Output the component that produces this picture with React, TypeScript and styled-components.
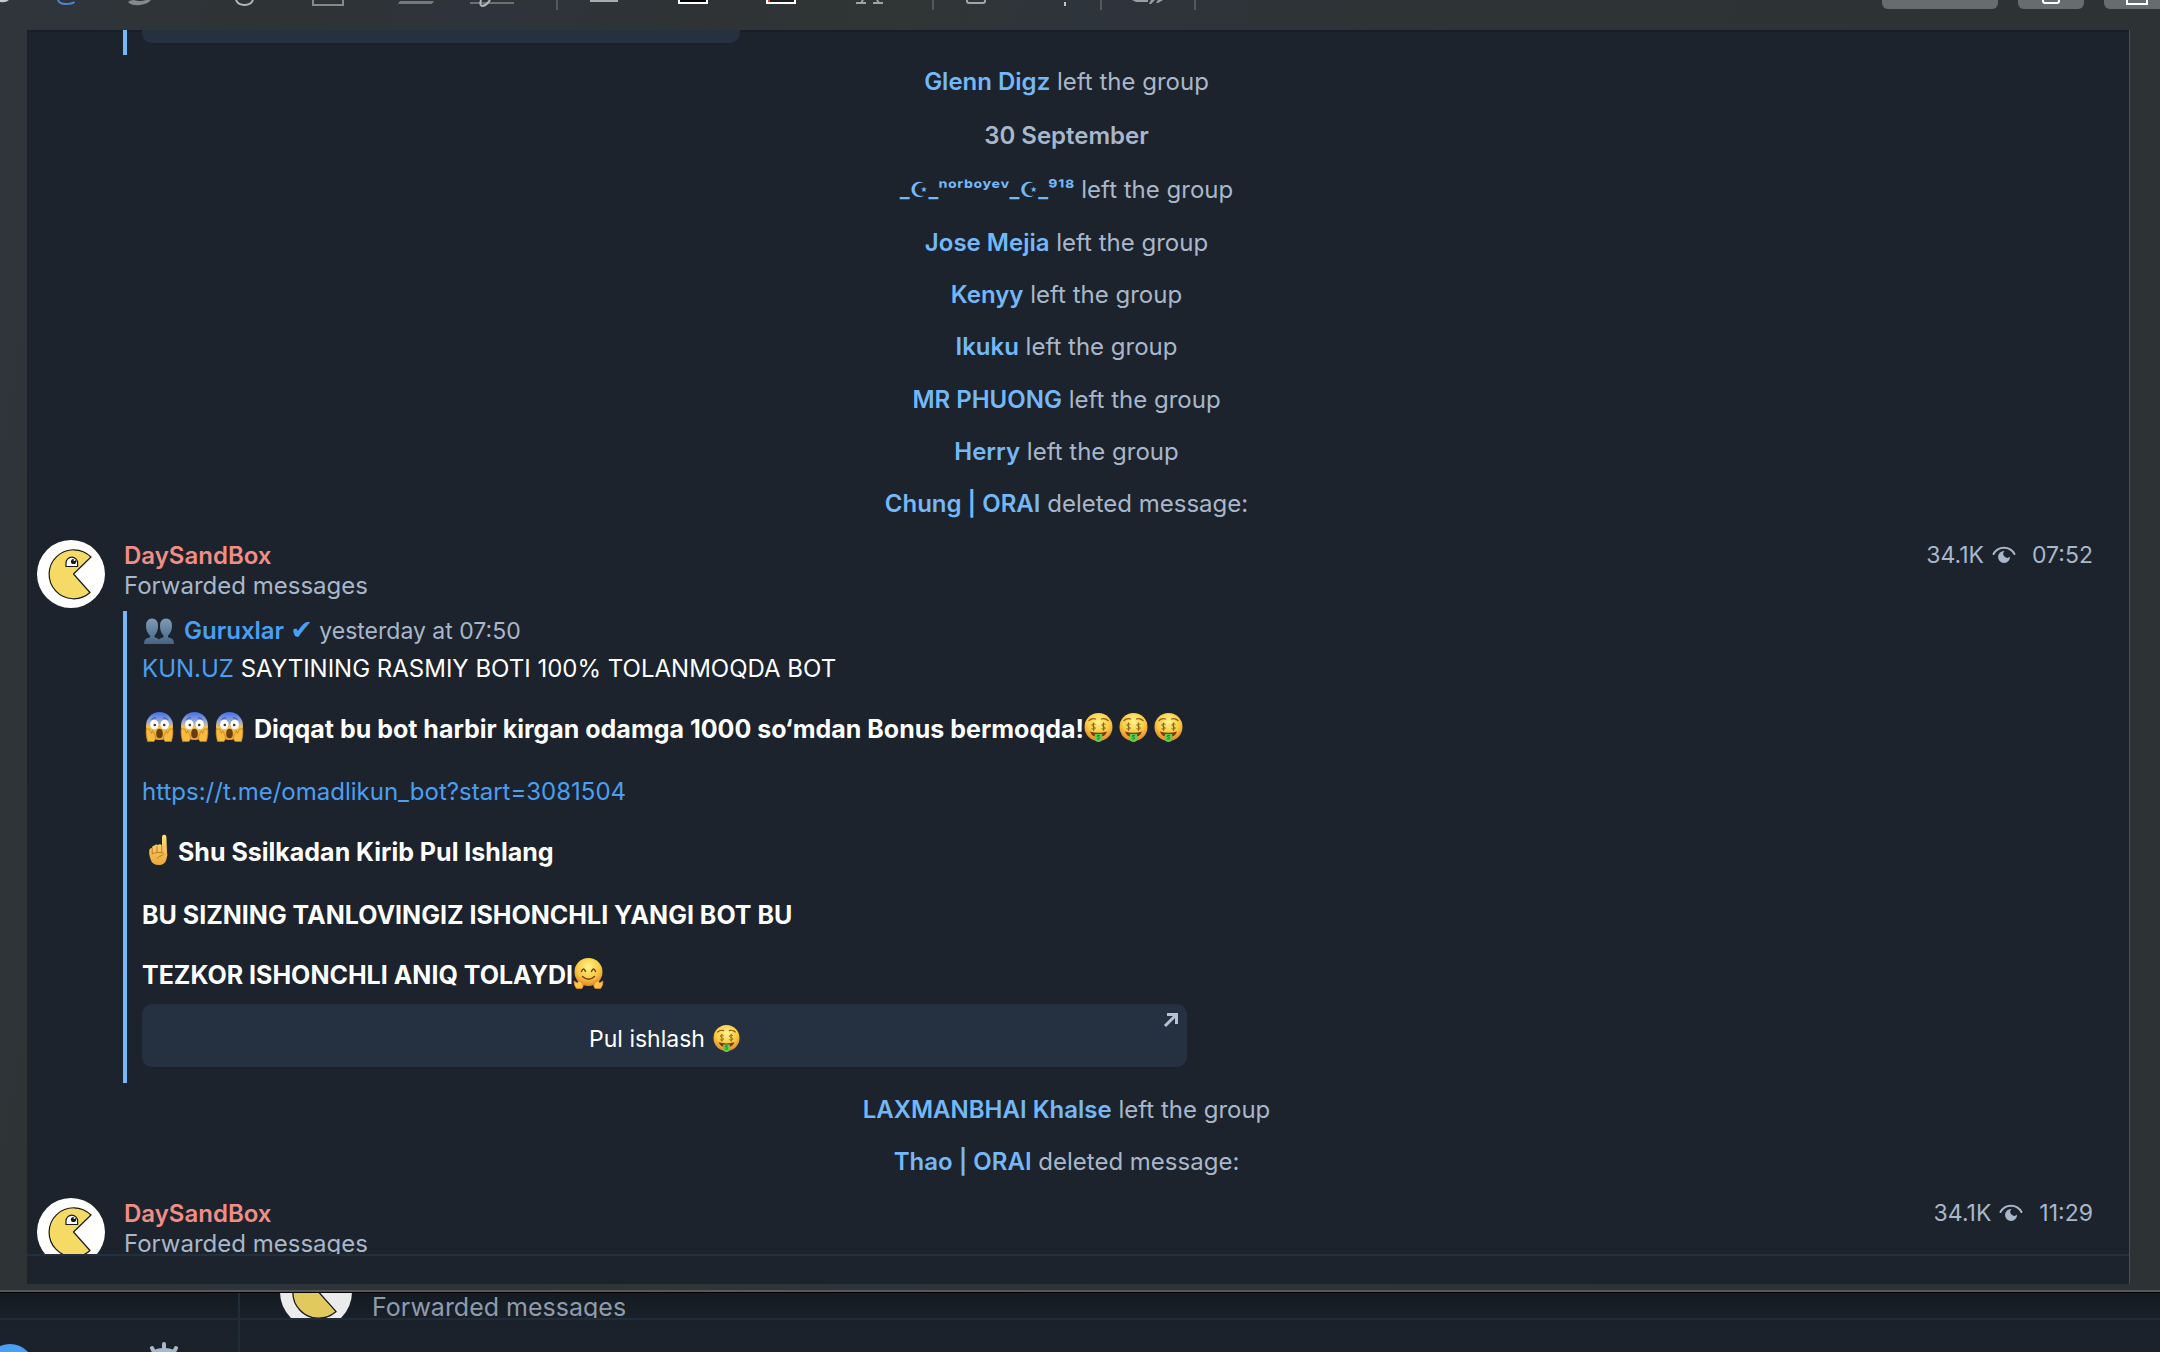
import React from "react";
import styled, { createGlobalStyle } from "styled-components";

const GlobalStyle = createGlobalStyle`
  * { box-sizing: border-box; }
  body {
    margin: 0;
    background: #1b222b;
    color: #ffffff;
    font-family: Inter, "Noto Sans", "DejaVu Sans", sans-serif;
    font-size: 24px;
    line-height: 30px;
  }
  p { margin: 0; }
  a { text-decoration: none; }
  button { font: inherit; border: 0; padding: 0; }
  svg { display: block; flex: none; }
`;

const Screen = styled.div`
  display: flex;
  flex-direction: column;
  height: 100vh;
  overflow: hidden;
`;

const PreviewWindow = styled.section`
  flex: 1;
  min-height: 0;
  display: flex;
  flex-direction: column;
  padding: 0 30px 6px 27px;
  background: linear-gradient(100deg, #2f353b 0%, #2e3335 12%, #2e343c 20%, #2f3335 30%, #303535 38%, #2e343c 46%, #2e3335 60%, #2d3235 100%);
  border-bottom: 2px solid #56595b;
  box-shadow: 0 1px 0 #000000;
  z-index: 1;
`;

const Toolbar = styled.div`
  display: flex;
  flex: none;
  height: 30px;
  margin: 0 -30px 0 -27px;
  overflow: hidden;
`;

const Tool = styled.button<{ $w: number }>`
  flex: none;
  width: ${(p) => p.$w}px;
  height: 10px;
  background: none;
`;

const Separator = styled.span`
  flex: none;
  width: 2px;
  height: 10px;
  background: #54585b;
`;

const Actions = styled.div`
  display: flex;
  gap: 20px;
  margin-left: auto;
`;

const Action = styled.button<{ $w: number; $flush?: boolean }>`
  display: flex;
  justify-content: center;
  width: ${(p) => p.$w}px;
  height: 9px;
  background: #676c6f;
  border-radius: ${(p) => (p.$flush ? "0 0 0 6px" : "0 0 6px 6px")};
`;

const Chat = styled.div`
  flex: 1;
  min-height: 0;
  display: flex;
  flex-direction: column;
  background: #1c232c;
  border-right: 1px solid #4b5054;
  box-shadow: inset 0 2px 0 #181e27;
`;

const History = styled.div`
  flex: 1;
  min-height: 0;
  overflow: hidden;
  padding: 0 23px 0 10px;
`;

const Composer = styled.div`
  flex: none;
  height: 30px;
  border-top: 2px solid #232f3d;
`;

const Events = styled.div<{ $h: number }>`
  display: flex;
  flex-direction: column;
  min-height: ${(p) => p.$h}px;
  margin-left: -10px;
`;

const Event = styled.p<{ $bold?: boolean }>`
  flex: 1;
  display: flex;
  align-items: center;
  justify-content: center;
  padding-top: 1px;
  white-space: pre;
  color: #a9b7cb;
  font-weight: ${(p) => (p.$bold ? 600 : 400)};
`;

const Member = styled.a<{ $small?: boolean }>`
  color: #74b8f8;
  font-size: ${(p) => (p.$small ? 21 : 24)}px;
  font-weight: 600;
`;

const Message = styled.article`
  display: flex;
  align-items: flex-start;
  gap: 19px;
  padding-top: 10px;
`;

const Body = styled.div`
  flex: 1;
  min-width: 0;
  padding-top: 1px;
`;

const Head = styled.header`
  display: flex;
  justify-content: space-between;
  padding-right: 13px;
`;

const Sender = styled.a`
  color: #f08d86;
  font-weight: 600;
`;

const Note = styled.p`
  color: #a9b7cb;
`;

const Meta = styled.div`
  display: flex;
  align-items: center;
  color: #a9b7cb;
  font-size: 23px;
  line-height: 28px;
  height: 28px;
`;

const Eye = styled.span`
  margin: 0 16px 0 8px;
`;

const Quote = styled.blockquote`
  width: fit-content;
  margin: 10px 0 0 -1px;
  padding: 4px 0 16px 15px;
  border-left: 4px solid #74b8f8;
`;

const QuoteTail = styled.div`
  width: 617px;
  height: 25px;
  margin-left: 86px;
  padding-left: 15px;
  border-left: 4px solid #74b8f8;
`;

const TailKeyboard = styled.div`
  height: 13px;
  background: #253040;
  border-radius: 0 0 10px 10px;
`;

const Line = styled.p<{ $gap?: number; $strong?: boolean }>`
  display: flex;
  align-items: center;
  height: 32px;
  line-height: 32px;
  margin-top: ${(p) => p.$gap ?? 0}px;
  font-size: ${(p) => (p.$strong ? 25 : 24)}px;
  font-weight: ${(p) => (p.$strong ? 700 : 400)};
  white-space: pre;
`;

const Link = styled.a<{ $bold?: boolean }>`
  color: #4b9ff2;
  font-weight: ${(p) => (p.$bold ? 600 : 400)};
`;

const Check = styled.span`
  font-size: 27px;
  line-height: 24px;
`;

const Stamp = styled.time`
  color: #a9b7cb;
  font-size: 23px;
`;

const Emojis = styled.span<{ $before?: number; $after?: number }>`
  display: flex;
  gap: 6px;
  margin: 0 ${(p) => p.$after ?? 0}px 4px ${(p) => p.$before ?? 0}px;
`;

const InlineButton = styled.button`
  position: relative;
  display: flex;
  align-items: center;
  justify-content: center;
  gap: 8px;
  width: 1045px;
  height: 63px;
  margin-top: 13px;
  padding-top: 6px;
  background: #253040;
  border-radius: 10px;
  color: #ffffff;
  font-size: 23px;
`;

const Corner = styled.span`
  position: absolute;
  top: 8px;
  right: 8px;
`;

const BackWindow = styled.section`
  display: flex;
  flex: none;
  height: 60px;
  background: linear-gradient(#141a21, #1a212a 30px, #1b222b);
`;

const Sidebar = styled.nav`
  display: flex;
  flex-direction: column;
  width: 240px;
  border-right: 2px solid #212c39;
`;

const BackPeek = styled.div`
  display: flex;
  flex: none;
  height: 28px;
  overflow: hidden;
  border-bottom: 2px solid #212c39;
`;

const BackChat = styled.div`
  flex: 1;
`;

const BackRow = styled.div`
  display: flex;
  align-items: flex-end;
  height: 26px;
  gap: 20px;
  padding-left: 40px;
  color: #8f9bad;
  font-size: 25px;
  line-height: 32px;
`;

const BackAvatar = styled.span`
  filter: brightness(0.92);
  margin-bottom: -10px;
`;

const BackNote = styled.span`
  margin-bottom: -5px;
`;

const Tabs = styled.div`
  display: flex;
  overflow: hidden;
  flex: 1;
`;

const Tab = styled.button`
  background: none;
  height: 32px;
`;

const Avatar = ({ size = 68 }: { size?: number }) => (
  <svg width={size} height={size} viewBox="0 0 68 68">
    <circle cx="34" cy="34" r="34" fill="#fff" />
    <path d="M54 17 A24.500 24.500 0 1 0 53 52.500 L36.500 34 Z" fill="#f5db66" stroke="#17191c" strokeWidth="1.200" strokeLinejoin="round" />
    <path d="M29 26.500 V23 a5.800 5.800 0 0 1 11.600 0 V26.500 Z" fill="#fff" stroke="#17191c" strokeWidth="1.200" />
    <circle cx="36.500" cy="21.500" r="2.600" fill="#17191c" />
    <circle cx="37.400" cy="20" r="0.900" fill="#fff" />
  </svg>
);

const EyeIcon = () => (
  <svg width="24" height="20" viewBox="0 0 24 20" fill="none">
    <path d="M1.500 9 C6 0.500 18 0.500 22.500 9" stroke="#a9b7cb" strokeWidth="2" strokeLinecap="round" />
    <path d="M12.500 6 A6 6 0 1 0 18 11.500 A3 3 0 0 1 12.500 6 Z" fill="#a9b7cb" />
  </svg>
);

const EmojiDefs = () => (
  <svg width="0" height="0" style={{ position: "absolute" }} aria-hidden="true">
    <defs>
      <radialGradient id="face" cx="50%" cy="32%" r="68%">
        <stop offset="0" stopColor="#fff38a" />
        <stop offset="0.600" stopColor="#fbc93f" />
        <stop offset="1" stopColor="#e2862a" />
      </radialGradient>
      <linearGradient id="scream" x1="0" y1="0" x2="0" y2="1">
        <stop offset="0" stopColor="#3f6fe8" />
        <stop offset="0.350" stopColor="#9aa9d6" />
        <stop offset="0.550" stopColor="#f3c549" />
        <stop offset="1" stopColor="#eda030" />
      </linearGradient>
      <linearGradient id="hand" x1="0" y1="0" x2="0" y2="1">
        <stop offset="0" stopColor="#fde27a" />
        <stop offset="1" stopColor="#eda738" />
      </linearGradient>
      <linearGradient id="people" x1="0" y1="0" x2="0" y2="1">
        <stop offset="0" stopColor="#7e9bb5" />
        <stop offset="1" stopColor="#456588" />
      </linearGradient>
    </defs>
  </svg>
);

const Scream = () => (
  <svg width="29" height="30" viewBox="0 0 29 30">
    <ellipse cx="14.500" cy="14" rx="13.500" ry="14" fill="url(#scream)" />
    <path d="M6.500 7.500 Q8.500 5.500 11 5.800 M22.500 7.500 Q20.500 5.500 18 5.800" stroke="#3a4fa0" strokeWidth="1" fill="none" />
    <ellipse cx="9.300" cy="12.500" rx="4.200" ry="4.800" fill="#fff" />
    <ellipse cx="19.700" cy="12.500" rx="4.200" ry="4.800" fill="#fff" />
    <circle cx="9.800" cy="13" r="1.300" fill="#4a3424" />
    <circle cx="19.200" cy="13" r="1.300" fill="#4a3424" />
    <ellipse cx="14.500" cy="21.500" rx="3.300" ry="4.800" fill="#6b3a12" />
    <path d="M1.200 17 Q0.500 22 2.500 29.500 H9 Q11.500 27 10 23 L7.500 18.500 L6.500 21.500 L4.500 17 Z" fill="#f7bb3d" stroke="#c9781d" strokeWidth="0.700" />
    <path d="M27.800 17 Q28.500 22 26.500 29.500 H20 Q17.500 27 19 23 L21.500 18.500 L22.500 21.500 L24.500 17 Z" fill="#f7bb3d" stroke="#c9781d" strokeWidth="0.700" />
  </svg>
);

const Dollar = ({ x }: { x: number }) => (
  <path d={`M${x + 2} 11.500 Q${x} 9.800 ${x - 1.6} 11.500 Q${x - 2} 13 ${x} 13.500 Q${x + 2.3} 14.200 ${x + 1.6} 15.800 Q${x} 17.200 ${x - 2} 15.600 M${x} 9.500 V17.800`} stroke="#8a6a1c" strokeWidth="1" fill="none" />
);

const Money = ({ size = 29 }: { size?: number }) => (
  <svg width={size} height={size} viewBox="0 0 29 29">
    <circle cx="14.500" cy="14" r="14" fill="url(#face)" />
    <path d="M5 7.500 Q8 4.800 11.500 6 M24 7.500 Q21 4.800 17.500 6" stroke="#8a5a18" strokeWidth="1.300" fill="none" strokeLinecap="round" />
    <Dollar x={9.5} />
    <Dollar x={19.5} />
    <path d="M6 18.500 Q14.500 21 23 18.500 Q21.500 24 14.500 24 Q7.500 24 6 18.500 Z" fill="#7a3b10" />
    <path d="M10.800 21 H18.200 V25 a3.700 4 0 0 1 -7.400 0 Z" fill="#5fd04a" />
    <path d="M16 22.800 Q13 21.500 13.200 23.300 Q16 24.300 15.600 25.600 Q14 27 12.800 25.600" stroke="#237a24" strokeWidth="1" fill="none" />
  </svg>
);

const Pointing = () => (
  <svg width="22" height="32" viewBox="0 0 22 32">
    <path d="M14 3 a2.200 2.200 0 0 1 4.400 0 L19 18 Q20 21 18.500 25 Q17 31 11 31 Q4 31 2.500 25 Q0.500 19 1.500 15.500 Q2 13.800 4 14 Q4 11.500 6.500 11.500 Q8 10 10 11 Q12 9.500 14 11.500 Z" fill="url(#hand)" />
    <path d="M4.200 14 V20 M9 12.500 V18.500 M13.800 12 V18 M5 19.500 Q9 17.500 14.500 18.800 Q16.500 20 14 21.500 Q11 22 9.500 24" stroke="#c07a22" strokeWidth="1" fill="none" strokeLinecap="round" />
  </svg>
);

const Hug = () => (
  <svg width="31" height="31" viewBox="0 0 31 31">
    <circle cx="15.500" cy="14" r="14" fill="url(#face)" />
    <path d="M8.500 13.500 Q10.500 8.500 12.500 13.500 M18.500 13.500 Q20.500 8.500 22.500 13.500 M9.500 18.500 Q15.500 24 21.500 18.500" stroke="#6b3f10" strokeWidth="1.400" fill="none" strokeLinecap="round" />
    <path d="M1 23 L4.500 25 L6 22.500 L9 24.500 Q11.500 28 9 30.500 H3.500 Q1 28 1 23 Z" fill="#fbc24c" stroke="#d8892a" strokeWidth="0.800" />
    <path d="M30 23 L26.500 25 L25 22.500 L22 24.500 Q19.500 28 22 30.500 H27.500 Q30 28 30 23 Z" fill="#fbc24c" stroke="#d8892a" strokeWidth="0.800" />
  </svg>
);

const People = () => (
  <svg width="30" height="30" viewBox="0 -4 30 30">
    <g fill="url(#people)">
      <path d="M0 26 Q0 20.500 4 20 Q6.500 19.500 6 17.500 Q2 14 2 8 Q2 0.500 8 0.500 Q14 0.500 14 8 Q14 14 10.500 17.500 Q10 19.500 13 20 Q16 21 16 26 Z" />
      <path d="M14 26 Q14 21 17 20 Q20 19.500 19.500 17.500 Q16 14 16 8 Q16 0.500 22 0.500 Q28 0.500 28 8 Q28 14 24 17.500 Q23.500 19.500 26 20 Q30 20.500 30 26 Z" />
    </g>
  </svg>
);

const tools = {
  pencil: <path d="M0 0 H9 Q6 3 0 2 Z" fill="#c6c8ca" />,
  sketch: <path d="M28 0 Q29 4 36 4 Q42 4 44.500 2" stroke="#4a86d9" strokeWidth="2" fill="none" />,
  draw: <path d="M28 2 Q32 6 40 5 Q48 4 51 0 H46 Q40 2 34 0 Q30 0 28 2 Z" fill="#85898d" />,
  shapes: <path d="M56 0 Q58 5 64.500 5 Q71 5 73 0" stroke="#b4b7ba" strokeWidth="2" fill="none" />,
  text: <path d="M23 0 V5 H53 V0" stroke="#85898c" strokeWidth="2" fill="none" />,
  highlight: <path d="M30 1 H64 L62 4 H28 Z" fill="#75797e" />,
  sign: (
    <>
      <path d="M20 3 H64" stroke="#6b6f73" strokeWidth="2" />
      <path d="M31 0 Q29 6 33 6 Q37 5 40 0" stroke="#b4b9bf" strokeWidth="2" fill="none" />
    </>
  ),
  style: <path d="M32 0 H60 V2 H32 Z" fill="#a9adb1" />,
  border: <path d="M41 -2 V3 H69 V-2" stroke="#fff" strokeWidth="2" fill="#000" />,
  fill: (
    <>
      <path d="M31 -2 V3 H59 V-2" stroke="#fff" strokeWidth="2" fill="#1d1c18" />
      <path d="M32 0 H34 V2 H32 Z" fill="#e5432f" />
    </>
  ),
  font: <path d="M20 3 H30 M37 3 H47 M25 3 L27 0 M43 3 L41 0" stroke="#a0a4a7" strokeWidth="2" fill="none" />,
  crop: <path d="M33 0 V1 Q33 3 35 3 H49 Q51 3 51 1 V0" stroke="#a0a5aa" strokeWidth="2" fill="none" />,
  adjust: <path d="M50 2 H52 V6 H50 Z" fill="#c1c4c6" />,
  caption: <path d="M30 0 H46 V2 H34 Z M49 0 H53 L49 4 H47 Z M56 0 H61 L56 3 H54 Z" fill="#9a9ea1" />,
};

const ToolButton = ({ name, w }: { name: keyof typeof tools; w: number }) => (
  <Tool $w={w} aria-label={name}>
    <svg width={w} height="10" viewBox={`0 0 ${w} 10`}>{tools[name]}</svg>
  </Tool>
);

const Left = ({ name, action = "left the group", small }: { name: string; action?: string; small?: boolean }) => (
  <Event><Member href="#" $small={small}>{name}</Member>{" " + action}</Event>
);

const Header = ({ time }: { time: string }) => (
  <Head>
    <div>
      <Sender href="#">DaySandBox</Sender>
      <Note>Forwarded messages</Note>
    </div>
    <Meta>
      34.1K
      <Eye><EyeIcon /></Eye>
      <time>{time}</time>
    </Meta>
  </Head>
);

export default function App() {
  return (
    <Screen>
      <GlobalStyle />
      <EmojiDefs />
      <PreviewWindow>
        <Toolbar>
          <ToolButton name="pencil" w={30} />
          <ToolButton name="sketch" w={70} />
          <ToolButton name="draw" w={80} />
          <ToolButton name="shapes" w={110} />
          <ToolButton name="text" w={80} />
          <ToolButton name="highlight" w={80} />
          <ToolButton name="sign" w={106} />
          <Separator />
          <ToolButton name="style" w={80} />
          <ToolButton name="border" w={98} />
          <ToolButton name="fill" w={100} />
          <ToolButton name="font" w={96} />
          <Separator />
          <ToolButton name="crop" w={80} />
          <ToolButton name="adjust" w={86} />
          <Separator />
          <ToolButton name="caption" w={92} />
          <Separator />
          <Actions>
            <Action $w={116} aria-label="Zoom" />
            <Action $w={66} aria-label="Rotate">
              <svg width="18" height="5" viewBox="0 0 18 5"><path d="M1 0 V1 Q1 3 3 3 H15 Q17 3 17 1 V0" stroke="#fff" strokeWidth="2" fill="none" /></svg>
            </Action>
            <Action $w={56} $flush aria-label="Share">
              <svg width="32" height="5" viewBox="0 0 32 5"><path d="M11 0 V4 H31 V0" stroke="#fff" strokeWidth="2" fill="none" /></svg>
            </Action>
          </Actions>
        </Toolbar>
        <Chat>
          <History>
            <QuoteTail><TailKeyboard /></QuoteTail>
            <Events $h={52}><Left name="Glenn Digz" /></Events>
            <Events $h={56}><Event $bold>30 September</Event></Events>
            <Events $h={53}><Left small name="_☪︎_ⁿᵒʳᵇᵒʸᵉᵛ_☪︎_⁹¹⁸" /></Events>
            <Events $h={314}>
              <Left name="Jose Mejia" />
              <Left name="Kenyy" />
              <Left name="Ikuku" />
              <Left name="MR PHUONG" />
              <Left name="Herry" />
              <Left name="Chung | ORAI" action="deleted message:" />
            </Events>
            <Message>
              <Avatar />
              <Body>
                <Header time="07:52" />
                <Quote>
                  <Line>
                    <Emojis $before={2} $after={10}><People /></Emojis>
                    <Link href="#" $bold>Guruxlar <Check>✔</Check></Link>
                    <Stamp> yesterday at 07:50</Stamp>
                  </Line>
                  <Line $gap={6}><Link href="#">KUN.UZ</Link> SAYTINING RASMIY BOTI 100% TOLANMOQDA BOT</Line>
                  <Line $gap={28} $strong>
                    <Emojis $before={3} $after={10}><Scream /><Scream /><Scream /></Emojis>
                    Diqqat bu bot harbir kirgan odamga 1000 so‘mdan Bonus bermoqda!
                    <Emojis><Money /><Money /><Money /></Emojis>
                  </Line>
                  <Line $gap={31}><Link href="#">https://t.me/omadlikun_bot?start=3081504</Link></Line>
                  <Line $gap={28} $strong>
                    <Emojis $before={6} $after={8}><Pointing /></Emojis>
                    Shu Ssilkadan Kirib Pul Ishlang
                  </Line>
                  <Line $gap={31} $strong>BU SIZNING TANLOVINGIZ ISHONCHLI YANGI BOT BU</Line>
                  <Line $gap={28} $strong>
                    TEZKOR ISHONCHLI ANIQ TOLAYDI
                    <Emojis><Hug /></Emojis>
                  </Line>
                  <InlineButton>
                    Pul ishlash <Money size={27} />
                    <Corner>
                      <svg width="16" height="16" viewBox="0 0 16 16"><path d="M2 14 L13 3 M4 2.500 H13.500 V12" stroke="#b4c1d6" strokeWidth="3" fill="none" /></svg>
                    </Corner>
                  </InlineButton>
                </Quote>
              </Body>
            </Message>
            <Events $h={105}>
              <Left name="LAXMANBHAI Khalse" />
              <Left name="Thao | ORAI" action="deleted message:" />
            </Events>
            <Message>
              <Avatar />
              <Body><Header time="11:29" /></Body>
            </Message>
          </History>
          <Composer />
        </Chat>
      </PreviewWindow>
      <BackWindow>
        <Sidebar>
          <BackPeek />
          <Tabs>
            <Tab aria-label="Chats">
              <svg width="149" height="32" viewBox="0 0 149 32"><circle cx="10" cy="48" r="24" fill="#4b9ff2" /></svg>
            </Tab>
            <Tab aria-label="Settings">
              <svg width="30" height="32" viewBox="0 0 30 32">
                <path d="M15 24 V32 M3 28 L6 34 M27 28 L24 34" stroke="#a9b7cb" strokeWidth="4" strokeLinecap="round" />
                <path d="M2 34 Q4 28 15 28 Q26 28 28 34 Z" fill="#a9b7cb" />
              </svg>
            </Tab>
          </Tabs>
        </Sidebar>
        <BackChat>
          <BackPeek>
            <BackRow>
              <BackAvatar><Avatar size={72} /></BackAvatar>
              <BackNote>Forwarded messages</BackNote>
            </BackRow>
          </BackPeek>
        </BackChat>
      </BackWindow>
    </Screen>
  );
}
